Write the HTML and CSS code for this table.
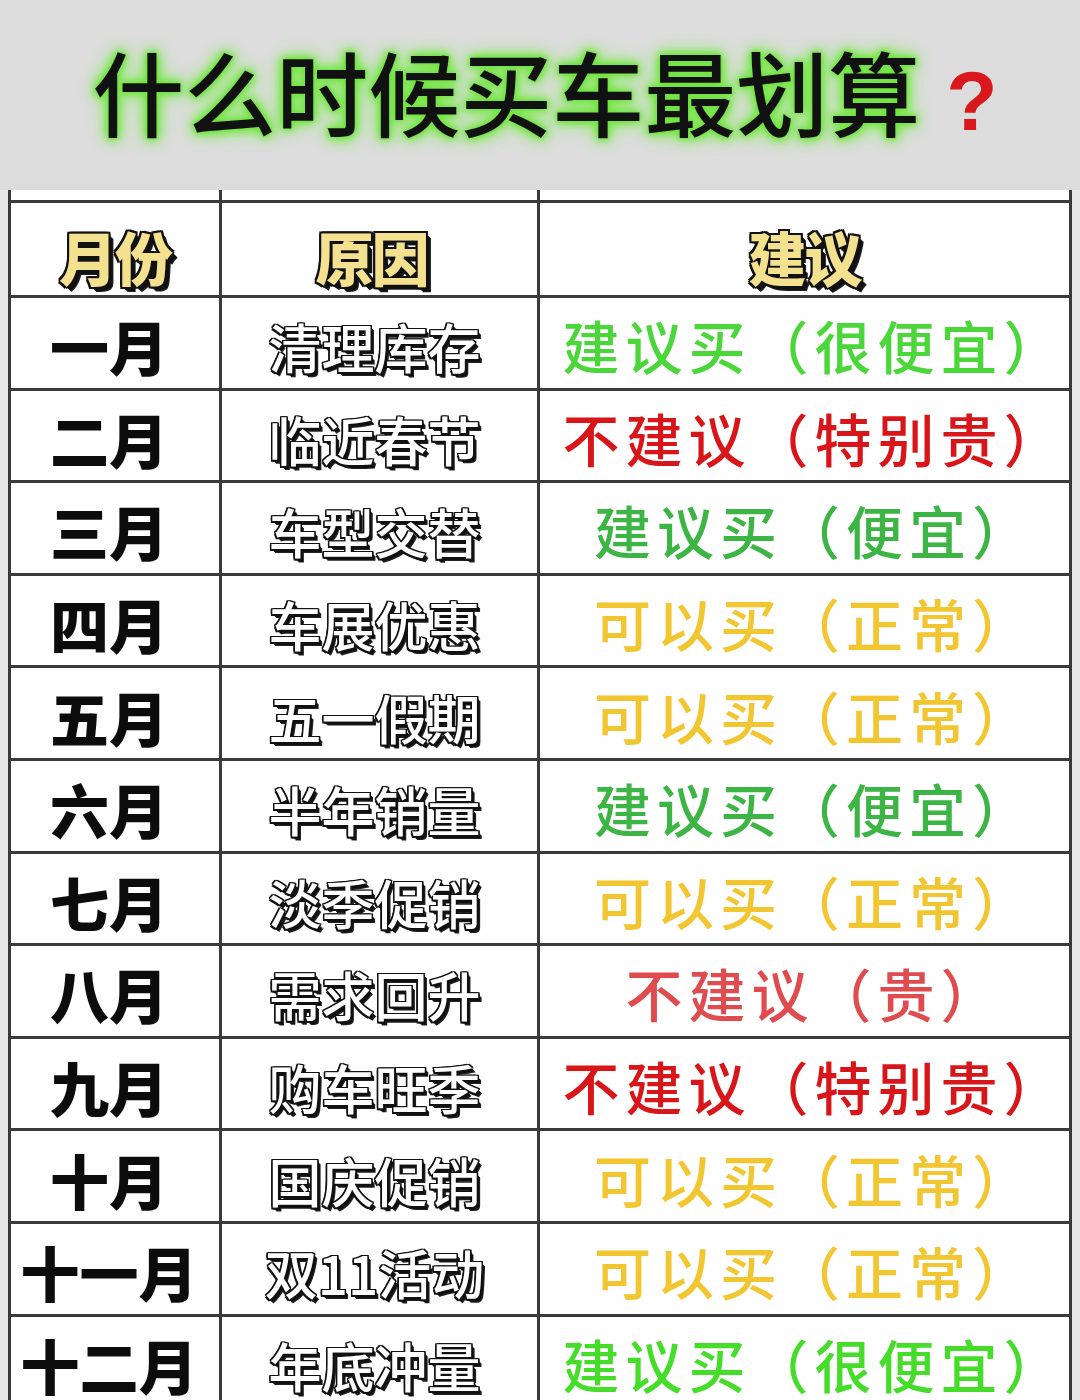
FILE: index.html
```html
<!DOCTYPE html>
<html lang="zh-CN">
<head>
<meta charset="utf-8">
<title>什么时候买车最划算？</title>
<link rel="stylesheet" href="styles.css">
</head>
<body>
<header class="title-band">
  <h1 class="title"><span class="title-main">什么时候买车最划算</span><span class="title-q">?</span></h1>
</header>
<main class="grid">
  <div class="cell spacer"></div><div class="cell spacer"></div><div class="cell spacer"></div>

  <div class="cell head"><span class="head-text">月份</span></div>
  <div class="cell head head-mid"><span class="head-text">原因</span></div>
  <div class="cell head"><span class="head-text">建议</span></div>

  <div class="cell month">一月</div><div class="cell reason">清理库存</div><div class="cell advice green1">建议买（很便宜）</div>
  <div class="cell month">二月</div><div class="cell reason">临近春节</div><div class="cell advice red1">不建议（特别贵）</div>
  <div class="cell month">三月</div><div class="cell reason">车型交替</div><div class="cell advice green2">建议买（便宜）</div>
  <div class="cell month">四月</div><div class="cell reason">车展优惠</div><div class="cell advice yellow">可以买（正常）</div>
  <div class="cell month">五月</div><div class="cell reason">五一假期</div><div class="cell advice yellow">可以买（正常）</div>
  <div class="cell month">六月</div><div class="cell reason">半年销量</div><div class="cell advice green2">建议买（便宜）</div>
  <div class="cell month">七月</div><div class="cell reason">淡季促销</div><div class="cell advice yellow">可以买（正常）</div>
  <div class="cell month">八月</div><div class="cell reason">需求回升</div><div class="cell advice red2">不建议（贵）</div>
  <div class="cell month">九月</div><div class="cell reason">购车旺季</div><div class="cell advice red1">不建议（特别贵）</div>
  <div class="cell month">十月</div><div class="cell reason">国庆促销</div><div class="cell advice yellow">可以买（正常）</div>
  <div class="cell month">十一月</div><div class="cell reason">双11活动</div><div class="cell advice yellow">可以买（正常）</div>
  <div class="cell month">十二月</div><div class="cell reason">年底冲量</div><div class="cell advice green3">建议买（很便宜）</div>
</main>
</body>
</html>
```

FILE: styles.css
```css
* { box-sizing: border-box; }

html, body {
  margin: 0;
  padding: 0;
}

body {
  background: #e8e8e8;
  font-family: "Noto Sans CJK SC", "Noto Sans", sans-serif;
  width: 1080px;
  height: 1400px;
  overflow: hidden;
}

.title-band {
  height: 190px;
  background: #dcdcdc;
  display: flex;
  align-items: center;
  justify-content: center;
  padding-left: 10px;
  padding-bottom: 4px;
}

.title {
  margin: 0;
  font-size: 92px;
  font-weight: 500;
  line-height: 1;
  letter-spacing: 0;
  white-space: nowrap;
}

.title-main {
  color: #111;
  text-shadow:
    0 0 4px #6fe23c,
    0 0 8px #6fe23c,
    0 0 12px #79e84c,
    0 0 16px #86ea5c,
    0 0 22px #a0ee80;
}

.title-q {
  color: #d8181c;
  font-family: "Liberation Sans", "DejaVu Sans", sans-serif;
  font-weight: 700;
  font-size: 84px;
  margin-left: 26px;
}

.grid {
  display: grid;
  grid-template-columns: 211px 318px 532px;
  grid-template-rows: 10px 95px repeat(12, 92.6px);
  width: 1064px;
  margin-left: 8px;
  background: #fefefe;
  border-left: 3px solid #3a3a3a;
}

.cell {
  border-top: 3px solid #3a3a3a;
  border-right: 3px solid #3a3a3a;
  display: flex;
  align-items: center;
  justify-content: center;
  white-space: nowrap;
  line-height: 1;
}

.cell.spacer {
  border-top: none;
}

.head {
  padding-top: 14px;
}

.head-text {
  font-size: 58px;
  font-weight: 900;
  color: #f4e190;
  letter-spacing: -2px;
  text-shadow:
    -2px -2px 0 #111, 2px -2px 0 #111, -2px 2px 0 #111, 2px 2px 0 #111,
    0 -2px 0 #111, 0 2px 0 #111, -2px 0 0 #111, 2px 0 0 #111,
    3px 3px 0 #111, 4px 4px 0 #111, 5px 5px 0 #222;
}

.head-mid {
  padding-right: 16px;
}

.month {
  font-size: 59px;
  font-weight: 900;
  color: #0c0c0c;
  padding-right: 12px;
  padding-top: 6px;
  letter-spacing: 0;
}

.reason {
  font-size: 53px;
  font-weight: 500;
  color: #ffffff;
  padding-top: 8px;
  padding-right: 10px;
  letter-spacing: 0;
  text-shadow:
    -1.5px -1.5px 0 #111, 1.5px -1.5px 0 #111, -1.5px 1.5px 0 #111, 1.5px 1.5px 0 #111,
    0 -1.5px 0 #111, 0 1.5px 0 #111, -1.5px 0 0 #111, 1.5px 0 0 #111,
    2.5px 2.5px 0 #111, 3.5px 3.5px 0 #222;
}

.advice {
  font-size: 57px;
  font-weight: 500;
  letter-spacing: 6px;
  padding-left: 20px;
  padding-top: 4px;
}

.green1 { color: #4bd63a; }
.green2 { color: #3db544; }
.green3 { color: #45dc2a; }
.red1 { color: #d8161a; }
.red2 { color: #e04b4f; }
.yellow { color: #f1c630; }
```
